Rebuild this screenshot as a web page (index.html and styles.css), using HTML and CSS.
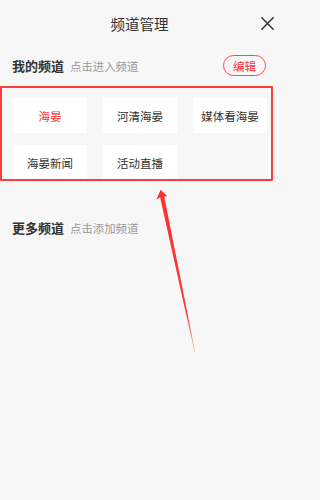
FILE: index.html
```html
<!DOCTYPE html>
<html lang="zh">
<head>
<meta charset="utf-8">
<title>频道管理</title>
<link rel="stylesheet" href="styles.css">
</head>
<body>
<div class="page">
  <header class="topbar">
    <span></span>
    <h1 class="title">频道管理</h1>
    <span class="close">
      <svg width="13" height="13" viewBox="0 0 13 13"><path d="M0.8 0.8 L12.2 12.2 M12.2 0.8 L0.8 12.2" stroke="#333" stroke-width="1.5" fill="none" stroke-linecap="round"/></svg>
    </span>
  </header>

  <section class="section">
    <div class="sec-head">
      <div class="sec-title"><b>我的频道</b><span class="hint">点击进入频道</span></div>
      <span class="edit-btn">编辑</span>
    </div>
    <div class="grid">
      <div class="tile active">海晏</div>
      <div class="tile">河清海晏</div>
      <div class="tile">媒体看海晏</div>
      <div class="tile">海晏新闻</div>
      <div class="tile">活动直播</div>
    </div>
  </section>

  <section class="section more">
    <div class="sec-head">
      <div class="sec-title"><b>更多频道</b><span class="hint">点击添加频道</span></div>
    </div>
  </section>

  <div class="highlight"></div>
  <svg class="arrow" width="283" height="500" viewBox="0 0 283 500">
    <defs>
      <linearGradient id="fade" x1="160" y1="190" x2="195" y2="353" gradientUnits="userSpaceOnUse">
        <stop offset="0" stop-color="#ff2f2f" stop-opacity="1"/>
        <stop offset="0.75" stop-color="#ff2f2f" stop-opacity="0.95"/>
        <stop offset="1" stop-color="#ff2f2f" stop-opacity="0.25"/>
      </linearGradient>
    </defs>
    <polygon fill="url(#fade)" points="160.7,189.8 167.3,196.3 164.2,196.6 195.4,353 194.7,353.1 160.1,197.3 156.3,199.7"/>
  </svg>
</div>
</body>
</html>
```

FILE: styles.css
```css
html, body {
  margin: 0;
  padding: 0;
  background: #f7f7f7;
}
body {
  font-family: "Noto Sans CJK SC", "Noto Sans", sans-serif;
  color: #333;
}
.page {
  position: relative;
  width: 283px;
  height: 500px;
  overflow: hidden;
}
.topbar {
  height: 47px;
  display: grid;
  grid-template-columns: 1fr auto 1fr;
  align-items: center;
}
.title {
  margin: 0;
  font-size: 14.5px;
  font-weight: normal;
  color: #333;
  line-height: 20px;
  padding-right: 4px;
}
.close {
  justify-self: end;
  padding-right: 9px;
  display: flex;
  align-items: center;
}
.close svg {
  display: block;
}
.sec-head {
  display: flex;
  align-items: center;
  justify-content: space-between;
  height: 21px;
  margin-top: 8px;
  padding: 0 17px 0 12px;
}
.sec-title {
  display: flex;
  align-items: center;
}
.sec-title b {
  font-size: 13px;
  font-weight: bold;
  color: #333;
}
.hint {
  font-size: 11.4px;
  color: #999;
  margin-left: 6px;
}
.edit-btn {
  box-sizing: border-box;
  width: 43px;
  height: 21px;
  border: 1px solid #ff4a4a;
  border-radius: 11px;
  color: #ff3333;
  font-size: 11.5px;
  display: flex;
  align-items: center;
  justify-content: center;
}
.grid {
  display: grid;
  grid-template-columns: repeat(3, 74px);
  grid-auto-rows: 35px;
  gap: 12px 16px;
  padding-left: 13px;
  margin-top: 22px;
}
.tile {
  background: #fff;
  font-size: 11.5px;
  color: #333;
  display: flex;
  align-items: center;
  justify-content: center;
}
.tile.active {
  color: #ff3636;
}
.more .sec-head {
  margin-top: 37px;
}
.highlight {
  position: absolute;
  left: 0;
  top: 86px;
  width: 273px;
  height: 95px;
  box-sizing: border-box;
  border: 2px solid #ff3b3b;
  border-radius: 1px;
}
.arrow {
  position: absolute;
  left: 0;
  top: 0;
  pointer-events: none;
}
```
